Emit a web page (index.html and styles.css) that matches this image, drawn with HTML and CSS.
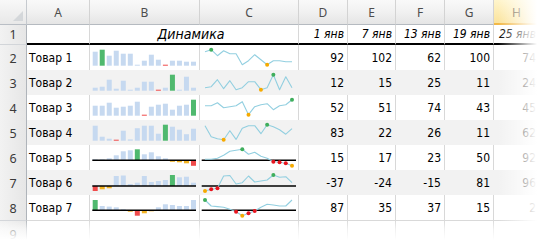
FILE: index.html
```html
<!DOCTYPE html>
<html lang="ru">
<head>
<meta charset="utf-8">
<title>Динамика</title>
<link rel="stylesheet" href="styles.css">
</head>
<body>
<div class="sheet">
  <div class="row colhead">
    <div class="corner"><span class="tri"></span></div>
    <div class="ch">A</div><div class="ch">B</div><div class="ch">C</div><div class="ch">D</div><div class="ch">E</div><div class="ch">F</div><div class="ch">G</div><div class="ch sel">H</div>
  </div>
  <div class="row titles">
    <div class="rh">1</div>
    <div class="c"></div>
    <div class="c title">Динамика</div>
    <div class="c date">1 янв</div>
    <div class="c date">7 янв</div>
    <div class="c date">13 янв</div>
    <div class="c date">19 янв</div>
    <div class="c date">25 янв</div>
  </div>
  <div class="row data">
    <div class="rh">2</div><div class="c name">Товар 1</div><div class="c spark bars"></div><div class="c spark line"></div>
    <div class="c num">92</div><div class="c num">102</div><div class="c num">62</div><div class="c num">100</div><div class="c num">74</div>
  </div>
  <div class="row data band">
    <div class="rh">3</div><div class="c name">Товар 2</div><div class="c spark bars"></div><div class="c spark line"></div>
    <div class="c num">12</div><div class="c num">15</div><div class="c num">25</div><div class="c num">11</div><div class="c num">24</div>
  </div>
  <div class="row data">
    <div class="rh">4</div><div class="c name">Товар 3</div><div class="c spark bars"></div><div class="c spark line"></div>
    <div class="c num">52</div><div class="c num">51</div><div class="c num">74</div><div class="c num">43</div><div class="c num">45</div>
  </div>
  <div class="row data band">
    <div class="rh">5</div><div class="c name">Товар 4</div><div class="c spark bars"></div><div class="c spark line"></div>
    <div class="c num">83</div><div class="c num">22</div><div class="c num">26</div><div class="c num">11</div><div class="c num">62</div>
  </div>
  <div class="row data">
    <div class="rh">6</div><div class="c name">Товар 5</div><div class="c spark bars"></div><div class="c spark line"></div>
    <div class="c num">15</div><div class="c num">17</div><div class="c num">23</div><div class="c num">50</div><div class="c num">92</div>
  </div>
  <div class="row data band">
    <div class="rh">7</div><div class="c name">Товар 6</div><div class="c spark bars"></div><div class="c spark line"></div>
    <div class="c num">-37</div><div class="c num">-24</div><div class="c num">-15</div><div class="c num">81</div><div class="c num">96</div>
  </div>
  <div class="row data last">
    <div class="rh">8</div><div class="c name">Товар 7</div><div class="c spark bars"></div><div class="c spark line"></div>
    <div class="c num">87</div><div class="c num">35</div><div class="c num">37</div><div class="c num">15</div><div class="c num">2</div>
  </div>
  <div class="row">
    <div class="rh">9</div><div class="c"></div><div class="c"></div><div class="c"></div><div class="c"></div><div class="c"></div><div class="c"></div><div class="c"></div><div class="c"></div>
  </div>
</div>
<div class="fade"></div>
<script src="script.js"></script>
</body>
</html>
```

FILE: styles.css
```css
html, body {
  margin: 0;
  padding: 0;
  background: #fff;
}
body {
  width: 540px;
  height: 240px;
  overflow: hidden;
  position: relative;
  font-family: "DejaVu Sans Condensed", "DejaVu Sans", sans-serif;
}
.sheet {
  display: flex;
  flex-direction: column;
}
.row {
  display: grid;
  grid-template-columns: 27px 63px 110px 99px 49px 48px 49px 49px 46px;
  height: 25px;
}
.row > div {
  box-sizing: border-box;
}
.corner {
  background: linear-gradient(#f8f8f8, #e8e8e8);
  border-right: 1px solid #c6cacf;
  border-bottom: 1px solid #b9bec5;
  display: flex;
  justify-content: flex-end;
  align-items: flex-end;
  padding: 0 3px 3px 0;
}
.tri {
  width: 0;
  height: 0;
  border-left: 10px solid transparent;
  border-bottom: 10px solid #d4d7da;
}
.ch {
  background: linear-gradient(#f9f9f9 0%, #f1f1f1 50%, #e5e5e5 100%);
  border-right: 1px solid #d3d3d3;
  border-bottom: 1px solid #b5bac0;
  font: 12px "Noto Sans", sans-serif;
  color: #4d4d4d;
  text-align: center;
  line-height: 21px;
  padding-top: 2px;
}
.ch.sel {
  background: linear-gradient(#fff5cc, #fbe39c);
  border-bottom: 2px solid #f2b847;
  color: #6a5a3c;
}
.rh {
  background: linear-gradient(to right, #f2f2f2, #e6e6e6);
  border-right: 1px solid #afb4ba;
  border-bottom: 1px solid #d2d5d9;
  font: 12.5px "Noto Sans", sans-serif;
  color: #3a3a3a;
  text-align: center;
  line-height: 22px;
  padding-top: 3px;
}
.c {
  border-right: 1px solid #d8d8d8;
  font-size: 12px;
  color: #000;
  line-height: 23px;
  padding-top: 2px;
  white-space: nowrap;
  overflow: hidden;
}
.titles {
  height: 20px;
}
.titles .c {
  border-bottom: 2px solid #000;
  line-height: 17px;
  padding-top: 1px;
  font-style: italic;
}
.titles .rh {
  line-height: 18px;
  padding-top: 1px;
}
.title {
  grid-column: span 2;
  text-align: center;
  font-size: 14px;
  padding-right: 6px;
}
.date, .num {
  text-align: right;
  padding-right: 3px;
}
.name {
  padding-left: 2px;
}
.band {
  background: #f2f2f2;
}
.band .c {
  border-right-color: transparent;
}
.last {
  height: 26px;
}
.last .c {
  border-bottom: 1px solid #d8d8d8;
}
.spark {
  padding-top: 0;
  line-height: 0;
}
.spark svg {
  display: block;
}
.bar { fill: #c6d9f0; }
.bar.hi { fill: #4fb96e; }
.bar.lo { fill: #f04b4b; }
.bar.neg { fill: #f3b322; }
.axis { stroke: #000; stroke-width: 1.4; }
.trend { fill: none; stroke: #92cfe0; stroke-width: 1.1; stroke-linejoin: round; }
.mk.hi { fill: #3fae5c; }
.mk.lo { fill: #f6aa00; }
.mk.neg { fill: #e8141e; }
.fade {
  position: absolute;
  inset: 0;
  pointer-events: none;
  background:
    linear-gradient(to right, rgba(255,255,255,0) 498px, rgba(255,255,255,.8) 528px, #fff 537px),
    linear-gradient(to bottom, rgba(255,255,255,0) 220px, rgba(255,255,255,.6) 229px, #fff 240px);
}
```

FILE: script.js
```js
const data = [
  {z: 20.7, v: [14,16,10,15,12,12,1,5,11,6,1,5,5,4,4], hi: 1, lo: 10},
  {z: 20.7, v: [3,4,11,2,10,1,3,9,9,1,3,16,1,14,3], hi: 11, lo: 9},
  {z: 20.7, v: [10,10,13,8,9,10,14,1,9,11,12,6,10,11,16], hi: 14, lo: 7},
  {z: 20.7, v: [15,4,2,1,10,1.3,12.5,15,15,7,16,14,11,6.5,12], hi: 10, lo: 3},
  {z: 15.3, v: [1,1,2,5,9,10,11,6,8,4,2,-1.5,-2,-3,-5.5], hi: 6, lo: 14, axis: true},
  {z: 16, v: [-5,-3.3,-2.3,10,10.5,2,3.3,10,4,5,6,11,8.7,9.3,3.3], hi: 11, lo: 0, axis: true},
  {z: 15.3, v: [10.3,4.3,3.7,3,1,-1.4,-5.4,-3,-0.7,3,6,5.3,4.3,4.3,10.3], hi: 0, lo: 6, axis: true}
];
const NS = 'http://www.w3.org/2000/svg';
function el(name, attrs) {
  const e = document.createElementNS(NS, name);
  for (const k in attrs) e.setAttribute(k, attrs[k]);
  return e;
}
document.querySelectorAll('.data').forEach((row, r) => {
  const d = data[r];
  const sb = el('svg', {width: 109, height: 25, viewBox: '0 0 109 25'});
  d.v.forEach((v, i) => {
    const h = Math.max(Math.abs(v), 1);
    const y = v >= 0 ? d.z - h : d.z;
    let cls = 'bar';
    if (i === d.hi) cls += ' hi';
    else if (i === d.lo) cls += ' lo';
    else if (v < 0) cls += ' neg';
    sb.appendChild(el('rect', {x: (2.7 + i * 7.02).toFixed(2), y: y.toFixed(2), width: 5, height: h.toFixed(2), 'class': cls}));
  });
  if (d.axis) sb.appendChild(el('line', {x1: 2.3, x2: 106, y1: d.z, y2: d.z, 'class': 'axis'}));
  row.querySelector('.bars').appendChild(sb);

  const sl = el('svg', {width: 98, height: 25, viewBox: '0 0 98 25'});
  if (d.axis) sl.appendChild(el('line', {x1: 1.7, x2: 96, y1: d.z, y2: d.z, 'class': 'axis'}));
  const pts = d.v.map((v, i) => [5 + i * 6.214, d.z - v]);
  sl.appendChild(el('polyline', {points: pts.map(p => p[0].toFixed(2) + ',' + p[1].toFixed(2)).join(' '), 'class': 'trend'}));
  d.v.forEach((v, i) => {
    let cls = null;
    if (i === d.hi) cls = 'hi';
    else if (i === d.lo) cls = 'lo';
    else if (v < 0) cls = 'neg';
    if (cls) sl.appendChild(el('circle', {cx: pts[i][0].toFixed(2), cy: pts[i][1].toFixed(2), r: 2, 'class': 'mk ' + cls}));
  });
  row.querySelector('.line').appendChild(sl);
});
```
